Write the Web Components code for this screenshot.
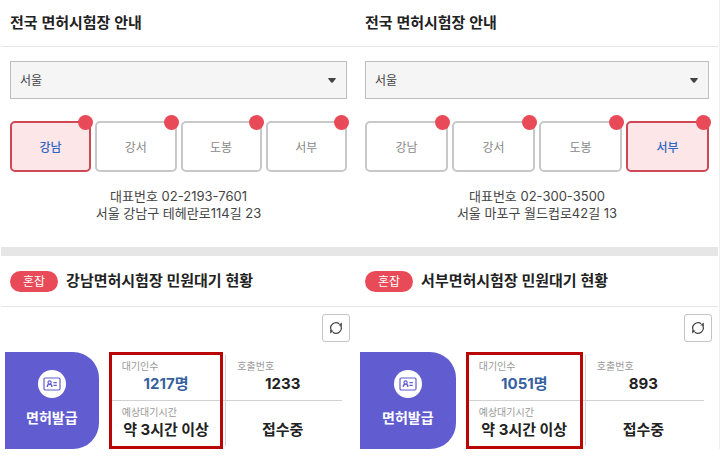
<!DOCTYPE html>
<html lang="ko">
<head>
<meta charset="utf-8">
<meta name="viewport" content="width=device-width, initial-scale=1">
<title>전국 면허시험장 안내</title>
<style>
body {
  margin: 0;
  background-color: #fff;
  color: #222;
  font-family: Inter, "Noto Sans CJK KR", sans-serif;
  font-size: 12px;
}
</style>
</head>
<body>
<center-compare>
  <center-panel>
    <section-title slot="title">전국 면허시험장 안내</section-title>
    <region-select slot="region" value="서울"></region-select>
    <center-tab slot="tabs" selected>강남</center-tab>
    <center-tab slot="tabs">강서</center-tab>
    <center-tab slot="tabs">도봉</center-tab>
    <center-tab slot="tabs">서부</center-tab>
    <span slot="phone">대표번호 02-2193-7601</span>
    <span slot="address">서울 강남구 테헤란로114길 23</span>
    <section-title slot="status" badge="혼잡">강남면허시험장 민원대기 현황</section-title>
    <service-row slot="service" name="면허발급">
      <stat-cell slot="waiting" label="대기인수" tone="blue">1217명</stat-cell>
      <stat-cell slot="waiting" label="예상대기시간">약 3시간 이상</stat-cell>
      <stat-cell slot="calling" label="호출번호">1233</stat-cell>
      <stat-cell slot="calling">접수중</stat-cell>
    </service-row>
  </center-panel>
  <center-panel>
    <section-title slot="title">전국 면허시험장 안내</section-title>
    <region-select slot="region" value="서울"></region-select>
    <center-tab slot="tabs">강남</center-tab>
    <center-tab slot="tabs">강서</center-tab>
    <center-tab slot="tabs">도봉</center-tab>
    <center-tab slot="tabs" selected>서부</center-tab>
    <span slot="phone">대표번호 02-300-3500</span>
    <span slot="address">서울 마포구 월드컵로42길 13</span>
    <section-title slot="status" badge="혼잡">서부면허시험장 민원대기 현황</section-title>
    <service-row slot="service" name="면허발급">
      <stat-cell slot="waiting" label="대기인수" tone="blue">1051명</stat-cell>
      <stat-cell slot="waiting" label="예상대기시간">약 3시간 이상</stat-cell>
      <stat-cell slot="calling" label="호출번호">893</stat-cell>
      <stat-cell slot="calling">접수중</stat-cell>
    </service-row>
  </center-panel>
</center-compare>

<script>
/**
 * Creates a template from a markup string.
 *
 * @param {string} markup - The markup.
 * @returns {HTMLTemplateElement} The template.
 */
const createTemplate = (markup) => {
  const template = document.createElement('template')
  template.innerHTML = markup
  return template
}

const compareTemplate = createTemplate(`
<style>
:host {
  display: grid;
  grid-template-columns: 355fr 362fr;
  padding: 0 1px;
  border-right: 1px solid #f0f0f0;
}
</style>
<slot></slot>
`)

customElements.define('center-compare',
  /**
   * Two panels next to each other.
   */
  class extends HTMLElement {
    constructor () {
      super()
      this.attachShadow({ mode: 'open' })
        .appendChild(compareTemplate.content.cloneNode(true))
    }
  }
)

const panelTemplate = createTemplate(`
<style>
:host {
  display: block;
  min-width: 0;
}

.center {
  padding: 14px 9px 25px;
}

.tabs {
  display: grid;
  grid-template-columns: repeat(4, 1fr);
  gap: 4px;
  margin-top: 22px;
}

.contact {
  display: flex;
  flex-direction: column;
  margin-top: 16px;
  color: #444;
  font-size: 13px;
  line-height: 17px;
  text-align: center;
}

hr {
  height: 9px;
  margin: 0;
  border: 0;
  background-color: #e6e6e6;
}

.toolbar {
  display: flex;
  justify-content: flex-end;
  padding: 7px 6px 10px;
}

button {
  display: grid;
  place-items: center;
  width: 28px;
  height: 28px;
  padding: 0;
  border: 1px solid #c4c4c4;
  border-radius: 3px;
  background-color: #fff;
  color: #444;
  cursor: pointer;
}
</style>

<slot name="title"></slot>
<div class="center">
  <slot name="region"></slot>
  <div class="tabs"><slot name="tabs"></slot></div>
  <div class="contact">
    <slot name="phone"></slot>
    <slot name="address"></slot>
  </div>
</div>
<hr>
<slot name="status"></slot>
<div class="toolbar">
  <button type="button" aria-label="새로고침">
    <svg width="14" height="14" viewBox="0 0 14 14" fill="none" stroke="currentColor" stroke-width="1.2">
      <path d="M2.4 9.6A5.3 5.3 0 0 1 10.2 2.8"/>
      <path d="M11.6 4.4A5.3 5.3 0 0 1 3.8 11.2"/>
      <path d="M12.8 1.4V5L9.4 4.2z" fill="currentColor" stroke="none"/>
      <path d="M1.2 12.6V9L4.6 9.8z" fill="currentColor" stroke="none"/>
    </svg>
  </button>
</div>
<slot name="service"></slot>
`)

customElements.define('center-panel',
  /**
   * One test center with its waiting status.
   */
  class extends HTMLElement {
    constructor () {
      super()
      this.attachShadow({ mode: 'open' })
        .appendChild(panelTemplate.content.cloneNode(true))
    }
  }
)

const titleTemplate = createTemplate(`
<style>
:host {
  display: flex;
  align-items: center;
  gap: 8px;
  height: 46px;
  padding: 0 9px;
  border-bottom: 1px solid #e6e6e6;
}

:host([badge]) {
  height: 50px;
}

h2 {
  margin: 0;
  font-size: 15px;
  font-weight: 600;
  line-height: 20px;
  white-space: nowrap;
}

.badge {
  padding: 0 13px;
  border-radius: 11px;
  background-color: #e84a57;
  color: #fff;
  line-height: 21px;
  white-space: nowrap;
}
</style>
<h2><slot></slot></h2>
`)

customElements.define('section-title',
  /**
   * Heading with an optional badge in front.
   */
  class extends HTMLElement {
    constructor () {
      super()
      this.attachShadow({ mode: 'open' })
        .appendChild(titleTemplate.content.cloneNode(true))
    }

    connectedCallback () {
      if (this.hasAttribute('badge')) {
        const badge = document.createElement('span')
        badge.className = 'badge'
        badge.textContent = this.getAttribute('badge')
        this.shadowRoot.querySelector('h2').before(badge)
      }
    }
  }
)

const selectTemplate = createTemplate(`
<style>
:host {
  display: grid;
  align-items: center;
}

select, svg {
  grid-area: 1 / 1;
}

select {
  appearance: none;
  width: 100%;
  height: 38px;
  padding: 0 9px;
  border: 1px solid #bdbdbd;
  border-radius: 0;
  background-color: #f5f5f5;
  color: #444;
  font: inherit;
}

svg {
  justify-self: end;
  margin-right: 11px;
  pointer-events: none;
}
</style>
<select aria-label="지역"></select>
<svg width="8" height="5" viewBox="0 0 8 5"><path d="M0.8 0H7.2Q8.4 0 7.6 1L4.8 4.5Q4 5.2 3.2 4.5L0.4 1Q-0.4 0 0.8 0z" fill="#444"/></svg>
`)

customElements.define('region-select',
  /**
   * Drop-down with the regions.
   */
  class extends HTMLElement {
    constructor () {
      super()
      this.attachShadow({ mode: 'open' })
        .appendChild(selectTemplate.content.cloneNode(true))
    }

    connectedCallback () {
      const region = this.getAttribute('value')
      this.shadowRoot.querySelector('select').add(new Option(region, region))
    }
  }
)

const tabTemplate = createTemplate(`
<style>
:host {
  display: block;
  position: relative;
}

button {
  width: 100%;
  height: 51px;
  padding: 0;
  border: 2px solid #c8c8c8;
  border-radius: 5px;
  background-color: #fff;
  color: #888;
  font: inherit;
  cursor: pointer;
}

:host([selected]) button {
  border-color: #cf4855;
  background-color: #fde6e7;
  color: #2f66c4;
  font-weight: 500;
}

.dot {
  position: absolute;
  top: -6px;
  right: -2px;
  width: 15px;
  height: 15px;
  border-radius: 50%;
  background-color: #e84a57;
}
</style>
<button type="button"><slot></slot></button>
<span class="dot"></span>
`)

customElements.define('center-tab',
  class extends HTMLElement {
    constructor () {
      super()
      this.attachShadow({ mode: 'open' })
        .appendChild(tabTemplate.content.cloneNode(true))
    }

    connectedCallback () {
      this.shadowRoot.querySelector('button')
        .setAttribute('aria-pressed', this.hasAttribute('selected'))
    }
  }
)

const serviceTemplate = createTemplate(`
<style>
:host {
  display: grid;
  grid-template-columns: 94fr 234fr;
  gap: 10px;
  padding: 0 14px 0 4px;
}

.service {
  display: flex;
  flex-direction: column;
  align-items: center;
  gap: 10px;
  padding-top: 18px;
  border-radius: 0 26px 26px 0;
  background-color: #615dd0;
  color: #fff;
  font-size: 14px;
  font-weight: 600;
  line-height: 20px;
}

.icon {
  display: grid;
  place-items: center;
  width: 28px;
  height: 28px;
  border-radius: 50%;
  background-color: #fff;
}

.stats {
  display: grid;
  grid-template-columns: 115fr 119fr;
}

.waiting {
  border: 3px solid #b90504;
}

/* the divider stands a little to the right of the red frame */
.calling {
  border: solid transparent;
  border-width: 3px 0;
  background: linear-gradient(#d2d2d6, #d2d2d6) 2px 0 / 1px 100% no-repeat padding-box;
}
</style>

<div class="service">
  <span class="icon">
    <svg width="18" height="14" viewBox="0 0 18 14" fill="none" stroke="#615dd0" stroke-width="1.2">
      <rect x="1" y="1" width="16" height="12" rx="1.2"/>
      <circle cx="6.6" cy="5.4" r="1.6"/>
      <path d="M4.4 10V9Q4.4 7.4 6.6 7.4T8.8 9V10" stroke-width="1.4"/>
      <path d="M10.4 5.6H13.8M10.4 8.4H13.8" stroke-width="1.4"/>
    </svg>
  </span>
  <span class="name"></span>
</div>
<div class="stats">
  <div class="waiting"><slot name="waiting"></slot></div>
  <div class="calling"><slot name="calling"></slot></div>
</div>
`)

customElements.define('service-row',
  /**
   * A service and its numbers.
   */
  class extends HTMLElement {
    constructor () {
      super()
      this.attachShadow({ mode: 'open' })
        .appendChild(serviceTemplate.content.cloneNode(true))
    }

    connectedCallback () {
      this.shadowRoot.querySelector('.name').textContent = this.getAttribute('name')
    }
  }
)

const statTemplate = createTemplate(`
<style>
:host {
  display: flex;
  flex-direction: column;
  justify-content: flex-end;
  gap: 1px;
  box-sizing: border-box;
  height: 45px;
  padding: 0 0 6px;
}

:host(:nth-child(odd)) {
  height: 46px;
  border-bottom: 1px solid #d2d2d6;
}

.label {
  padding-left: 10px;
  color: #999;
  font-size: 10px;
  line-height: 14px;
  white-space: nowrap;
}

:host([slot="calling"]) .label {
  padding-left: 14px;
}

.value {
  font-size: 15px;
  font-weight: 700;
  line-height: 20px;
  text-align: center;
  white-space: nowrap;
}

:host([tone="blue"]) .value {
  color: #36619f;
}
</style>
<span class="label"></span>
<span class="value"><slot></slot></span>
`)

customElements.define('stat-cell',
  /**
   * Small label above a bold value.
   */
  class extends HTMLElement {
    constructor () {
      super()
      this.attachShadow({ mode: 'open' })
        .appendChild(statTemplate.content.cloneNode(true))
    }

    connectedCallback () {
      this.shadowRoot.querySelector('.label').textContent = this.getAttribute('label') || ''
    }
  }
)
</script>
</body>
</html>
